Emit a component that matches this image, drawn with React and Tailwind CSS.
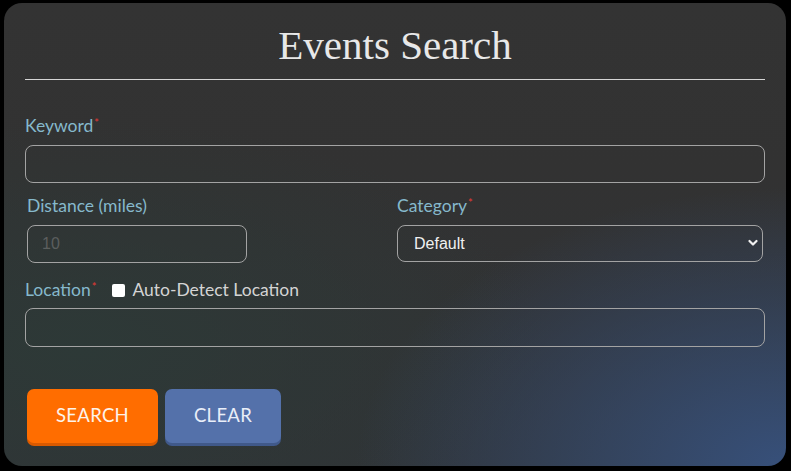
export default function App() {
  const label = "text-[17.5px] leading-[20px] text-[#86b9cc] font-['Lato',sans-serif]";
  const star = <span className="ml-[1px] text-[#e53935] text-[11px] align-top relative -top-[3px]">*</span>;
  const field =
    "w-full h-[38px] rounded-[8px] border-[1.5px] border-[#a3a3a3] bg-transparent px-[14px] text-[16px] font-['Liberation_Sans',Arial,sans-serif] outline-none";

  return (
    <div className="w-[791px] h-[471px] bg-black pt-[3px] pl-[4px]">
      <div className="w-[782px] h-[463px] rounded-[18px] overflow-hidden bg-[radial-gradient(ellipse_55%_60%_at_100%_100%,#37507a_0%,rgba(55,80,122,0)_100%),radial-gradient(ellipse_60%_50%_at_10%_75%,#2d3937_0%,rgba(45,57,55,0)_100%),linear-gradient(180deg,#333333_0%,#323232_35%,#303336_100%)] px-[21px] pt-[22px]">
        <h1 className="h-[40px] leading-[40px] text-center text-[41px] text-[#e8e8e8] font-['Liberation_Serif',serif]">
          Events Search
        </h1>
        <div className="mt-[14px] h-px bg-[#d6d6d6]" />

        <div className="mt-[36px]">
          <div className={label}>Keyword{star}</div>
          <input className={`${field} mt-[9px] text-[#eee]`} />
        </div>

        <div className="mt-[13px] flex">
          <div className="w-[372px] pl-[2px]">
            <div className={label}>Distance (miles)</div>
            <input
              className={`${field} mt-[9px] w-[220px]! text-[#888]`}
              placeholder="10"
            />
          </div>
          <div className="flex-1 pr-[2px]">
            <div className={label}>Category{star}</div>
            <div className="relative mt-[9px]">
              <select className={`${field} h-[37px]! appearance-none px-[16px] text-[#f0f0f0]`}>
                <option className="text-black">Default</option>
              </select>
              <svg
                className="absolute right-[5px] top-[14px] w-[10px] h-[8px]"
                viewBox="0 0 10 8"
              >
                <path d="M1.5 2 L5 5.5 L8.5 2" fill="none" stroke="#f0f0f0" strokeWidth="2.2" strokeLinecap="round" strokeLinejoin="round" />
              </svg>
            </div>
          </div>
        </div>

        <div className="mt-[17px]">
          <div className="flex items-center h-[20px]">
            <span className={label}>Location{star}</span>
            <span className="ml-[16px] w-[13px] h-[13px] bg-white rounded-[2px]" />
            <span className="ml-[7px] text-[17.5px] text-[#d4d4d4] font-['Lato',sans-serif]">
              Auto-Detect Location
            </span>
          </div>
          <input className={`${field} mt-[8px] h-[39px]! text-[#eee]`} />
        </div>

        <div className="mt-[42px] flex gap-[7px] pl-[2px]">
          <button className="w-[131px] h-[54px] rounded-[7px] bg-[#ff6d00] shadow-[0_3px_0_#d95a00] text-[18.5px] tracking-[0.3px] text-[#fdf3ea] font-['Lato',sans-serif]">
            SEARCH
          </button>
          <button className="w-[116px] h-[54px] rounded-[7px] bg-[#5471aa] shadow-[0_3px_0_#40598a] text-[18.5px] tracking-[0.3px] text-[#e9eef8] font-['Lato',sans-serif]">
            CLEAR
          </button>
        </div>
      </div>
    </div>
  );
}
